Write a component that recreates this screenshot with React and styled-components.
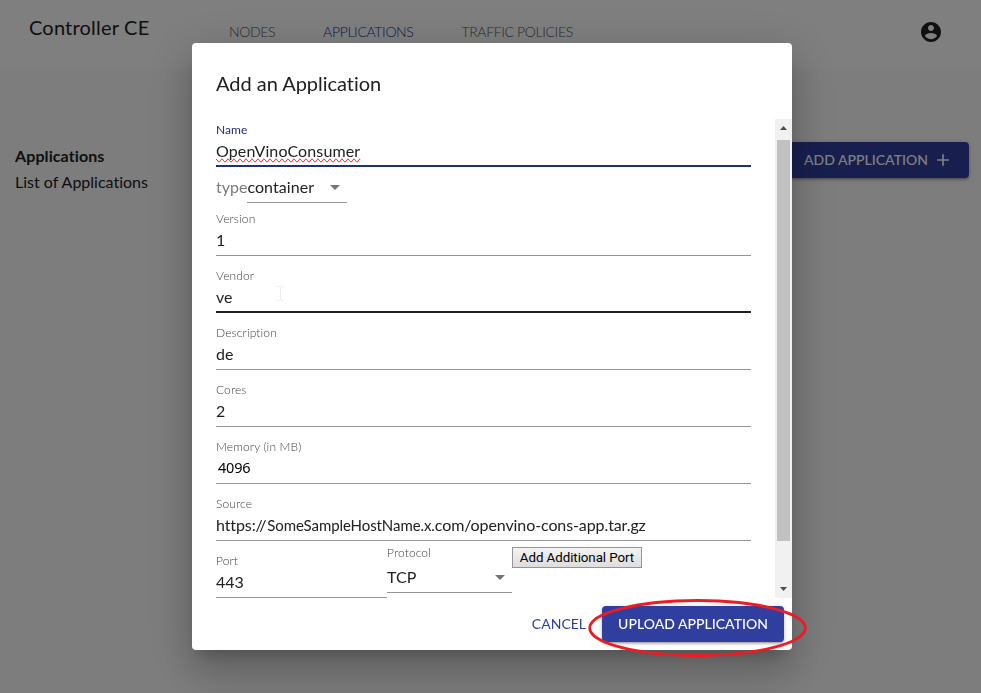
import React from 'react';
import styled, { createGlobalStyle } from 'styled-components';

const GlobalStyle = createGlobalStyle`
  * { box-sizing: border-box; }
  html, body { margin: 0; height: 100%; overflow: hidden; background: #fafafa; }
  body {
    font-family: Lato, "Liberation Sans", sans-serif;
    font-variant-ligatures: none;
    color: #212121;
  }
`;

const Page = styled.div`
  width: 981px;
  height: 693px;
  background: #fafafa;
`;

const Header = styled.header`
  height: 69px;
  display: flex;
  align-items: flex-start;
  background: #fefefe;
`;

const Brand = styled.div`
  width: 200px;
  margin-left: 29px;
  padding-top: 15px;
  font-size: 20px;
  line-height: 24px;
  letter-spacing: 0.2px;
  white-space: nowrap;
`;

const Nav = styled.nav`
  flex: 1;
  display: flex;
  gap: 48px;
  padding: 22px 0 0;
`;

const NavLink = styled.a`
  font-size: 14px;
  font-weight: 300;
  line-height: 20px;
  letter-spacing: -0.36px;
  white-space: nowrap;
  color: ${(p) => (p.$active ? '#202f92' : '#555')};
`;

const Account = styled.div`
  margin: 20px 38px 0 0;
  height: 24px;
  svg { display: block; }
`;

const Main = styled.main`
  display: flex;
  justify-content: space-between;
  padding: 73px 12px 0 15px;
`;

const Intro = styled.div`
  padding-top: 1px;
  font-size: 16px;
  line-height: 26px;
`;

const IntroTitle = styled.div`
  font-weight: 700;
  letter-spacing: 0.1px;
`;

const Button = styled.button`
  display: flex;
  align-items: center;
  height: 36px;
  padding: 0 16px 2px;
  border: 0;
  border-radius: 4px;
  background: ${(p) => (p.$text ? 'transparent' : '#303f9f')};
  color: ${(p) => (p.$text ? '#303f9f' : '#fff')};
  box-shadow: ${(p) => (p.$text ? 'none' : '0 1px 5px rgba(0,0,0,.2), 0 2px 2px rgba(0,0,0,.14), 0 3px 1px -2px rgba(0,0,0,.12)')};
  font: ${(p) => (p.$text ? 400 : 500)} 14px Lato, "Liberation Sans", sans-serif;
  letter-spacing: 0.02px;
  white-space: nowrap;
  svg { margin: 2px 0 0 5px; }
`;

const Backdrop = styled.div`
  position: fixed;
  inset: 0;
  display: flex;
  justify-content: center;
  align-items: center;
  padding-left: 3px;
  background: rgba(0, 0, 0, 0.5);
`;

const Dialog = styled.section`
  width: 600px;
  height: 607px;
  display: flex;
  flex-direction: column;
  background: #fff;
  border-radius: 4px;
  box-shadow: 0 11px 15px -7px rgba(0,0,0,.2), 0 24px 38px 3px rgba(0,0,0,.14), 0 9px 46px 8px rgba(0,0,0,.12);
`;

const DialogTitle = styled.h2`
  height: 76px;
  margin: 0;
  padding: 24px 24px 0;
  font-size: 20px;
  line-height: 32px;
  font-weight: 400;
  letter-spacing: -0.03px;
`;

const DialogBody = styled.div`
  height: 479px;
  display: flex;
  justify-content: space-between;
  padding-left: 24px;
`;

const Form = styled.div`
  width: 535px;
`;

const Field = styled.div`
  width: ${(p) => p.$width || 'auto'};
  height: ${(p) => p.$height || 57}px;
  display: flex;
  flex-direction: column;
  justify-content: flex-end;
`;

const Label = styled.label`
  display: block;
  font-size: 12px;
  font-weight: ${(p) => (p.$active ? 400 : 300)};
  line-height: 14px;
  letter-spacing: ${(p) => (p.$active ? 0.02 : 0.12)}px;
  color: ${(p) => (p.$active ? '#1f2f7d' : '#444')};
`;

const Value = styled.div`
  height: 30px;
  padding: ${(p) => p.$top || 3}px 0 0 ${(p) => p.$indent || 0}px;
  border-bottom: ${(p) => p.$line || '1px solid #949494'};
  font-size: ${(p) => p.$size || 16}px;
  line-height: 21px;
  white-space: pre;
  color: ${(p) => p.$color || '#212121'};
  font-family: ${(p) => p.$font || 'inherit'};
  letter-spacing: ${(p) => p.$spacing || 0}px;
`;

const Misspelled = styled.span`
  text-decoration-line: spelling-error;
`;

const Host = styled.span`
  display: inline-block;
  width: 168.5px;
  padding-left: 1px;
  font-size: 15px;
  letter-spacing: -0.08px;
`;

const TypeRow = styled.div`
  height: 36px;
  display: flex;
  font-size: 16px;
  color: #7b7b7b;
  line-height: 39px;
`;

const Select = styled.div`
  width: ${(p) => p.$width}px;
  height: 36px;
  display: flex;
  justify-content: space-between;
  align-items: center;
  padding: 5px 7px 0 0;
  border-bottom: 1px solid #949494;
  font-size: 16px;
  line-height: 20px;
  letter-spacing: 0.06px;
  color: #212121;
`;

const PortRow = styled.div`
  display: flex;
  align-items: flex-start;
`;

const Protocol = styled.div`
  width: 125px;
  padding-top: 5px;
`;

const ProtocolSelect = styled(Select)`
  height: 33px;
  padding-top: 2px;
`;

const PortButton = styled.button`
  width: 130px;
  height: 21px;
  margin-top: 6px;
  padding: 0;
  border: 1px solid #949494;
  border-radius: 0;
  background: linear-gradient(#f3f3f3, #dddddd);
  color: #000;
  font: 13.33px/19px Roboto, "Liberation Sans", sans-serif;
  letter-spacing: -0.06px;
  white-space: nowrap;
`;

const Scrollbar = styled.div`
  width: 17px;
  display: flex;
  flex-direction: column;
  align-items: center;
  background: #f1f1f1;
  svg { display: block; }
`;

const Thumb = styled.div`
  width: 13px;
  height: 401px;
  margin: 4px 0 40px;
  background: #c1c1c1;
`;

const Actions = styled.div`
  display: flex;
  justify-content: flex-end;
  padding: 8px 8px 0 0;
`;

const Mark = styled.svg`
  position: fixed;
  left: 580px;
  top: 590px;
`;

const Cursor = styled.svg`
  position: fixed;
  left: 275px;
  top: 285px;
`;

const Caret = () => (
  <svg width="10" height="5" viewBox="0 0 10 5"><path d="M0 0h10L5 5z" fill="#757575" /></svg>
);

const Arrow = ({ down }) => (
  <svg width="17" height="17" viewBox="0 0 17 17">
    <path d={down ? 'M5 6h7L8.5 10z' : 'M5 11h7L8.5 7z'} fill="#4d4d4d" />
  </svg>
);

const TextField = ({ label, children, active, height, width, ...value }) => (
  <Field $height={height} $width={width}>
    <Label $active={active}>{label}</Label>
    <Value {...value}>{children}</Value>
  </Field>
);

export default function App() {
  return (
    <>
      <GlobalStyle />
      <Page>
        <Header>
          <Brand>Controller CE</Brand>
          <Nav>
            <NavLink>NODES</NavLink>
            <NavLink $active>APPLICATIONS</NavLink>
            <NavLink>TRAFFIC POLICIES</NavLink>
          </Nav>
          <Account>
            <svg width="24" height="24" viewBox="0 0 24 24" fill="#212121">
              <path d="M12 2C6.48 2 2 6.48 2 12s4.48 10 10 10 10-4.48 10-10S17.52 2 12 2zm0 3c1.66 0 3 1.34 3 3s-1.34 3-3 3-3-1.34-3-3 1.34-3 3-3zm0 14.2c-2.5 0-4.71-1.28-6-3.22.03-1.99 4-3.08 6-3.08 1.99 0 5.97 1.09 6 3.08-1.29 1.94-3.5 3.22-6 3.22z" />
            </svg>
          </Account>
        </Header>
        <Main>
          <Intro>
            <IntroTitle>Applications</IntroTitle>
            <div>List of Applications</div>
          </Intro>
          <Button>
            ADD APPLICATION
            <svg width="20" height="20" viewBox="0 0 24 24" fill="#fff"><path d="M19 13h-6v6h-2v-6H5v-2h6V5h2v6h6v2z" /></svg>
          </Button>
        </Main>
      </Page>
      <Backdrop>
        <Dialog>
          <DialogTitle>Add an Application</DialogTitle>
          <DialogBody>
            <Form>
              <TextField label="Name" active height={48} $line="2px solid #1f2f7d" $spacing={0.12}>
                <Misspelled>OpenVinoConsumer</Misspelled>
              </TextField>
              <TypeRow>
                type
                <Select $width={100}>container<Caret /></Select>
              </TypeRow>
              <TextField label="Version" height={53}>1</TextField>
              <TextField label="Vendor" $line="2px solid #212121">ve</TextField>
              <TextField label="Description">de</TextField>
              <TextField label="Cores">2</TextField>
              <TextField label="Memory (in MB)" $top={3} $indent={2} $color="#000" $size={14.5} $spacing={-0.2} $font='"Noto Sans", sans-serif'>4096</TextField>
              <TextField label="Source" $spacing={-0.1}>https://<Host>SomeSampleHostName.x.</Host>com/openvino-cons-app.tar.gz</TextField>
              <PortRow>
                <TextField label="Port" width="171px">443</TextField>
                <Protocol>
                  <Label>Protocol</Label>
                  <ProtocolSelect $width={125}>TCP<Caret /></ProtocolSelect>
                </Protocol>
                <PortButton>Add Additional Port</PortButton>
              </PortRow>
            </Form>
            <Scrollbar>
              <Arrow />
              <Thumb />
              <Arrow down />
            </Scrollbar>
          </DialogBody>
          <Actions>
            <Button $text>CANCEL</Button>
            <Button>UPLOAD APPLICATION</Button>
          </Actions>
        </Dialog>
      </Backdrop>
      <Cursor width="10" height="18" fill="none" stroke="#ededed">
        <path d="M2 1.5h2.5M6 1.5h2.5M5.5 2v13M2 15.5h2.5M6 15.5h2.5" />
      </Cursor>
      <Mark width="236" height="76" fill="none" stroke="#ed1c24" strokeWidth="2.8">
        <ellipse cx="117.5" cy="38" rx="107.8" ry="27.5" />
      </Mark>
    </>
  );
}
